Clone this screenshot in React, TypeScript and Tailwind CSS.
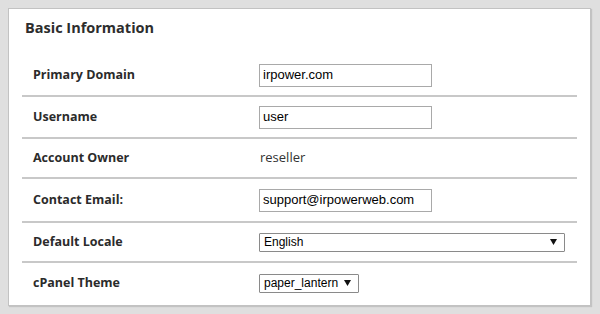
const rows: { label: string; h: string; kind: "input" | "text" | "select"; value: string; w?: string; last?: boolean }[] = [
  { label: "Primary Domain", h: "h-[42px]", kind: "input", value: "irpower.com" },
  { label: "Username", h: "h-[42px]", kind: "input", value: "user" },
  { label: "Account Owner", h: "h-[40px]", kind: "text", value: "reseller" },
  { label: "Contact Email:", h: "h-[44px]", kind: "input", value: "support@irpowerweb.com" },
  { label: "Default Locale", h: "h-[40px]", kind: "select", value: "English", w: "w-[306px]" },
  { label: "cPanel Theme", h: "h-[40px]", kind: "select", value: "paper_lantern", w: "w-[100px]", last: true },
];

function Arrow() {
  return (
    <svg width="7" height="6" viewBox="0 0 7 6" className="shrink-0">
      <polygon points="0,0 7,0 3.5,6" fill="#111" />
    </svg>
  );
}

export default function App() {
  return (
    <div className="w-[600px] h-[314px] bg-[#dfdfdf] p-[8px] pr-[9px] overflow-hidden font-['Open_Sans',sans-serif]">
      <div className="h-[298px] bg-white border border-[#c2c2c2] shadow-[1px_1px_1px_rgba(0,0,0,0.12)] px-[13px]">
        <div className="h-[46px] pl-[3px] pt-[8px] text-[14.5px] font-bold text-[#2d2d2d] leading-[22px]">
          Basic Information
        </div>
        <div>
          {rows.map((r) => (
            <div
              key={r.label}
              className={[
                "flex items-center",
                r.h,
                r.last ? "" : "border-b-2 border-[#c8c8c8]",
              ].join(" ")}
            >
              <div className="w-[237px] pl-[11px] text-[12.5px] font-bold text-[#2b2b2b]">{r.label}</div>
              {r.kind === "input" && (
                <div className="w-[173px] h-[23px] border border-[#a9a9a9] flex items-center px-[3px] font-['Liberation_Sans',Arial,sans-serif] text-[13px] text-black">
                  {r.value}
                </div>
              )}
              {r.kind === "text" && (
                <div className="pl-[1px] text-[13px] text-[#333]">{r.value}</div>
              )}
              {r.kind === "select" && (
                <div
                  className={[
                    r.w,
                    "h-[19px] border border-[#8a8a8a] rounded-[1px] flex items-center justify-between pl-[4px] pr-[7px] font-['Liberation_Sans',Arial,sans-serif] text-[12px] text-black",
                  ].join(" ")}
                >
                  <span>{r.value}</span>
                  <Arrow />
                </div>
              )}
            </div>
          ))}
        </div>
      </div>
    </div>
  );
}
